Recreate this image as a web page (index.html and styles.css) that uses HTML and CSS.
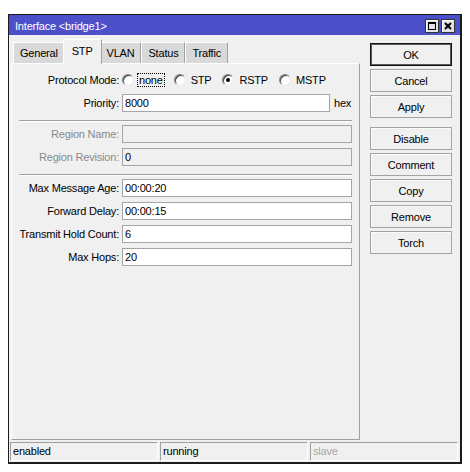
FILE: index.html
```html
<!DOCTYPE html>
<html>
<head>
<meta charset="utf-8">
<title>Interface bridge1</title>
<link rel="stylesheet" href="styles.css">
</head>
<body>
<div class="window">
  <div class="titlebar">
    <span class="title">Interface &lt;bridge1&gt;</span>
    <div class="tbtns">
      <span class="tbtn"><svg width="12" height="12" viewBox="0 0 12 12"><rect x="2.5" y="2.5" width="7" height="7" fill="none" stroke="#000" stroke-width="1"/><rect x="2" y="2" width="8" height="2" fill="#000"/></svg></span>
      <span class="tbtn"><svg width="12" height="12" viewBox="0 0 12 12"><path d="M3 3 L9 9 M9 3 L3 9" stroke="#000" stroke-width="2"/></svg></span>
    </div>
  </div>
  <div class="body">
    <div class="main">
      <div class="leftcol">
        <div class="tabs">
          <div class="tab">General</div>
          <div class="tab active">STP</div>
          <div class="tab">VLAN</div>
          <div class="tab">Status</div>
          <div class="tab">Traffic</div>
        </div>
        <div class="panel">
          <div class="row">
            <span class="lbl">Protocol Mode:</span>
            <div class="radios">
              <span class="radio"><span class="circle"></span><span class="rtext focus">none</span></span>
              <span class="radio"><span class="circle"></span><span class="rtext">STP</span></span>
              <span class="radio"><span class="circle checked"></span><span class="rtext">RSTP</span></span>
              <span class="radio"><span class="circle"></span><span class="rtext">MSTP</span></span>
            </div>
          </div>
          <div class="row">
            <span class="lbl">Priority:</span>
            <div class="input">8000</div>
            <span class="unit">hex</span>
          </div>
          <div class="sep"></div>
          <div class="row">
            <span class="lbl disabled">Region Name:</span>
            <div class="input off"></div>
          </div>
          <div class="row">
            <span class="lbl disabled">Region Revision:</span>
            <div class="input off">0</div>
          </div>
          <div class="sep"></div>
          <div class="row">
            <span class="lbl">Max Message Age:</span>
            <div class="input">00:00:20</div>
          </div>
          <div class="row">
            <span class="lbl">Forward Delay:</span>
            <div class="input">00:00:15</div>
          </div>
          <div class="row">
            <span class="lbl">Transmit Hold Count:</span>
            <div class="input">6</div>
          </div>
          <div class="row">
            <span class="lbl">Max Hops:</span>
            <div class="input">20</div>
          </div>
        </div>
      </div>
      <div class="buttons">
        <div class="btn default">OK</div>
        <div class="btn">Cancel</div>
        <div class="btn">Apply</div>
        <div class="btn group">Disable</div>
        <div class="btn">Comment</div>
        <div class="btn">Copy</div>
        <div class="btn">Remove</div>
        <div class="btn">Torch</div>
      </div>
    </div>
    <div class="status">
      <div class="sbox">enabled</div>
      <div class="sbox">running</div>
      <div class="sbox dim">slave</div>
    </div>
  </div>
</div>
</body>
</html>
```
FILE: styles.css
```css
* { box-sizing: border-box; }
html, body { margin: 0; padding: 0; background: #fff; }
body {
  font-family: "Liberation Sans", Arial, sans-serif;
  font-size: 11px;
  letter-spacing: -0.2px;
  color: #000;
}
.window {
  margin: 14px 0 0 8px;
  width: 454px;
  height: 450px;
  border-style: solid;
  border-color: #1c1c1c;
  border-width: 1px 2px 2px 1px;
  background: #f0f0f0;
  display: flex;
  flex-direction: column;
}
.titlebar {
  height: 20px;
  flex: none;
  background: #4d51c9;
  color: #fff;
  display: flex;
  align-items: center;
  justify-content: space-between;
  padding: 0 5px 0 6px;
}
.title { padding-top: 1px; }
.tbtns { display: flex; gap: 2px; padding-top: 2px; }
.tbtn {
  width: 14px;
  height: 14px;
  border: 1px solid #333;
  background: #e2e2e2;
  box-shadow: inset 1px 1px 0 #fff;
  display: flex;
  align-items: center;
  justify-content: center;
}
.body { flex: 1; display: flex; flex-direction: column; }
.main { display: flex; padding: 4px 8px 0 2px; }
.leftcol { width: 349px; display: flex; flex-direction: column; }
.tabs {
  height: 24px;
  display: flex;
  align-items: flex-end;
  padding-left: 2px;
}
.tab {
  height: 21px;
  padding: 0 6px;
  display: flex;
  align-items: center;
  background: #d9d9d9;
  border-top: 1px solid #fff;
  border-left: 1px solid #fff;
  border-right: 1px solid #a0a0a0;
}
.tab.active {
  height: 25px;
  padding: 0 8px;
  margin: 0 -2px -1px;
  background: #f0f0f0;
  position: relative;
  z-index: 1;
  padding-bottom: 2px;
}
.panel {
  height: 377px;
  border: 1px solid;
  border-color: #fff #a0a0a0 #a0a0a0 #fff;
  padding: 7px 7px 0 0;
  display: flex;
  flex-direction: column;
}
.row {
  display: flex;
  align-items: center;
  height: 18px;
  flex: none;
  margin-bottom: 5px;
}
.lbl {
  width: 107px;
  flex: none;
  text-align: right;
  margin-right: 3px;
  white-space: nowrap;
}
.lbl.disabled { color: #8a8a8a; }
.input {
  flex: 1;
  height: 18px;
  background: #fff;
  border: 1px solid #a5a5a5;
  padding-left: 2px;
  line-height: 16px;
}
.input.off { background: #f0f0f0; }
.unit { width: 22px; flex: none; padding-left: 4px; }
.sep {
  height: 2px;
  flex: none;
  margin: 3px 0 3px 7px;
  border-top: 1px solid #a0a0a0;
  border-bottom: 1px solid #fff;
}
.radios { display: flex; align-items: center; }
.radio { display: flex; align-items: center; margin-right: 9px; }
.circle {
  width: 12px;
  height: 12px;
  border-radius: 50%;
  background: #fff;
  border: 1px solid;
  border-color: #808080 #e8e8e8 #e8e8e8 #808080;
  box-shadow: inset 1px 1px 0 #404040;
  margin-right: 3px;
  position: relative;
}
.circle.checked::after {
  content: "";
  position: absolute;
  left: 3px;
  top: 3px;
  width: 4px;
  height: 4px;
  border-radius: 50%;
  background: #000;
}
.rtext { border: 1px dotted transparent; padding: 0 1px; line-height: 12px; }
.rtext.focus { border-color: #000; }
.buttons {
  width: 82px;
  margin-left: 10px;
  padding-top: 4px;
  display: flex;
  flex-direction: column;
  gap: 3px;
}
.btn {
  height: 23px;
  border: 1px solid #a3a3a3;
  background: #f0f0f0;
  box-shadow: inset 1px 1px 0 #fbfbfb;
  display: flex;
  align-items: center;
  justify-content: center;
}
.btn.default { border-color: #111; box-shadow: inset 0 0 0 1px #5a5a5a; }
.btn.group { margin-top: 6px; }
.status {
  margin-top: 2px;
  height: 19px;
  display: grid;
  grid-template-columns: repeat(3, 1fr);
  gap: 2px;
  padding: 0 2px 0 1px;
}
.sbox {
  border: 1px solid;
  border-color: #a0a0a0 #fff #fff #a0a0a0;
  padding-left: 2px;
  line-height: 17px;
  white-space: nowrap;
  overflow: hidden;
}
.sbox.dim { color: #a8a8a8; }
```
